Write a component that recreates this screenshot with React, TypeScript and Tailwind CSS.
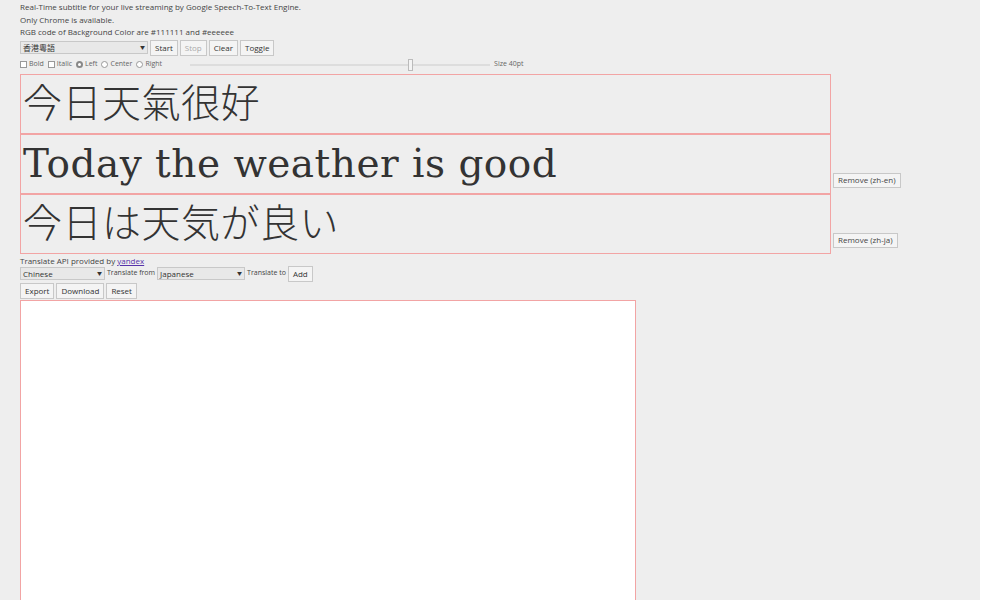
const sans = { fontFamily: '"Open Sans", "Noto Sans CJK TC", sans-serif' }
const serif = { fontFamily: '"DejaVu Serif", "Noto Sans CJK JP", serif' }

function Btn({ children, disabled }: { children: React.ReactNode; disabled?: boolean }) {
  return (
    <button
      className={`h-[16px] px-[4px] border border-[#c8c8c8] bg-[#f4f4f4] text-[8px] leading-none ${disabled ? "text-[#aaa]" : "text-[#333]"}`}
    >
      {children}
    </button>
  )
}

function Sel({ value, w }: { value: string; w: string }) {
  return (
    <div className={`${w} h-[13px] flex items-center justify-between px-[2px] border border-[#c8c8c8] bg-[#e8e8e8] text-[8px] text-[#333]`}>
      <span>{value}</span>
      <span className="text-[5px]">▼</span>
    </div>
  )
}

function Line({ text, remove }: { text: string; remove?: string }) {
  return (
    <div className="flex items-end gap-[2px]">
      <div className="w-[811px] h-[60px] border border-[#f2a4a4] flex items-center px-[2px] text-[39px] font-light text-[#333] leading-none tracking-[0.5px]" style={serif}>
        {text}
      </div>
      {remove && (
        <div className="mb-[6px]">
          <button className="h-[15px] px-[4px] border border-[#c8c8c8] bg-[#f4f4f4] text-[8px] text-[#444] leading-none">
            Remove ({remove})
          </button>
        </div>
      )}
    </div>
  )
}

export default function App() {
  return (
    <div className="w-[1000px] h-[600px] overflow-hidden flex bg-white" style={sans}>
      <div className="w-[980px] h-full bg-[#eeeeee] pl-[20px] pt-[1px] text-[8px] text-[#444]">
        <div className="leading-[12.5px]">
          <p>Real-Time subtitle for your live streaming by Google Speech-To-Text Engine.</p>
          <p>Only Chrome is available.</p>
          <p>RGB code of Background Color are #111111 and #eeeeee</p>
        </div>
        <div className="flex items-center gap-[2px] mt-[1px]">
          <Sel value="香港粵語" w="w-[128px]" />
          <Btn>Start</Btn>
          <Btn disabled>Stop</Btn>
          <Btn>Clear</Btn>
          <Btn>Toggle</Btn>
        </div>
        <div className="flex items-center h-[18px] text-[7px] text-[#666]">
          <span className="w-[7px] h-[7px] border border-[#999] bg-white mr-[2px]" />Bold
          <span className="w-[7px] h-[7px] border border-[#999] bg-white ml-[4px] mr-[2px]" />Italic
          <span className="w-[7px] h-[7px] rounded-full border-[2px] border-[#888] bg-white ml-[4px] mr-[2px]" />Left
          <span className="w-[7px] h-[7px] rounded-full border border-[#999] bg-white ml-[4px] mr-[2px]" />Center
          <span className="w-[7px] h-[7px] rounded-full border border-[#999] bg-white ml-[4px] mr-[2px]" />Right
          <div className="relative w-[300px] h-[2px] bg-[#ddd] ml-[28px] mr-[4px]">
            <div className="absolute left-[218px] top-[-5px] w-[5px] h-[12px] border border-[#bbb] bg-[#f4f4f4]" />
          </div>
          Size 40pt
        </div>
        <Line text="今日天氣很好" />
        <Line text="Today the weather is good" remove="zh-en" />
        <Line text="今日は天気が良い" remove="zh-ja" />
        <p className="leading-[11px] mt-[1px]">
          Translate API provided by <span className="text-[#5533aa] underline">yandex</span>
        </p>
        <div className="flex items-center gap-[2px] text-[7px]">
          <Sel value="Chinese" w="w-[85px]" />
          <span>Translate from</span>
          <Sel value="Japanese" w="w-[88px]" />
          <span>Translate to</span>
          <Btn>Add</Btn>
        </div>
        <div className="flex items-center gap-[2px] mt-[1px]">
          <Btn>Export</Btn>
          <Btn>Download</Btn>
          <Btn>Reset</Btn>
        </div>
        <div className="w-[616px] h-[320px] bg-white border border-[#f2a4a4] mt-[1px]" />
      </div>
    </div>
  )
}
